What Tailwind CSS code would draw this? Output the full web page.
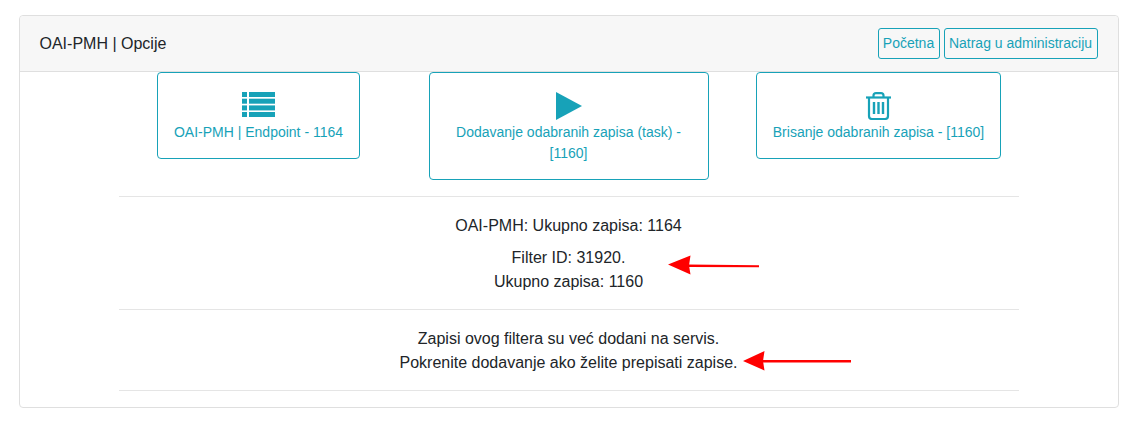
<!DOCTYPE html>
<html lang="en">
  <head>
    <meta charset="UTF-8" />
    <meta name="viewport" content="width=device-width, initial-scale=1.0" />
    <title>OAI-PMH | Opcije</title>
    <script src="https://cdn.jsdelivr.net/npm/@tailwindcss/browser@4"></script>
  </head>
  <body class="bg-white font-['Liberation_Sans',Arial,sans-serif] text-[16px] leading-[24px] text-[#212529]">
    <div class="relative mt-[15px] ml-[19px] w-[1100px] rounded border border-[#dfdfdf]">
      <!-- Header -->
      <div class="flex h-[56px] items-center justify-between rounded-t border-b border-[#dfdfdf] bg-[#f7f7f7] pr-5 pl-[19.5px]">
        <div>OAI-PMH | Opcije</div>
        <div class="flex gap-1">
          <a href="#" class="w-[62px] rounded-[3px] border border-[#17a2b8] py-1 pr-[1px] text-center text-[14px] leading-[21px] text-[#17a2b8]">Početna</a>
          <a href="#" class="w-[154px] rounded-[3px] border border-[#17a2b8] py-1 pr-[1px] text-center text-[14px] leading-[21px] text-[#17a2b8]">Natrag u administraciju</a>
        </div>
      </div>
      <!-- Body -->
      <div class="mx-auto w-[900px] pb-4 text-center">
        <div class="grid grid-cols-3 items-start gap-[30px]">
          <div class="flex">
            <a href="#" class="ml-[38px] block w-[203px] rounded-[4px] border border-[#17a2b8] py-[15px] text-[14px] leading-[21px] whitespace-nowrap text-[#17a2b8]">
              <span class="flex h-[34px] items-start justify-center pt-[4px]">
                <svg width="33" height="25" viewBox="0 0 33 25" fill="#17a2b8">
                  <rect x="0" y="0" width="5" height="5" />
                  <rect x="7" y="0" width="26" height="5" />
                  <rect x="0" y="6.7" width="5" height="5" />
                  <rect x="7" y="6.7" width="26" height="5" />
                  <rect x="0" y="13.4" width="5" height="5" />
                  <rect x="7" y="13.4" width="26" height="5" />
                  <rect x="0" y="20" width="5" height="5" />
                  <rect x="7" y="20" width="26" height="5" />
                </svg>
              </span>
              OAI-PMH | Endpoint - 1164
            </a>
          </div>
          <div class="flex justify-center">
            <a href="#" class="block w-[280px] rounded-[4px] border border-[#17a2b8] px-4 py-[15px] text-[14px] leading-[21px] text-[#17a2b8]">
              <span class="flex h-[34px] items-start justify-center pt-[4px]">
                <svg width="26" height="28" viewBox="0 0 26 28" fill="#17a2b8">
                  <path d="M0 0 L26 14 L0 28 Z" />
                </svg>
              </span>
              <span class="block pr-[1px]">Dodavanje odabranih zapisa (task) - [1160]</span>
            </a>
          </div>
          <div class="flex">
            <a href="#" class="ml-[17px] block w-[245px] rounded-[4px] border border-[#17a2b8] py-[15px] text-[14px] leading-[21px] whitespace-nowrap text-[#17a2b8]">
              <span class="flex h-[34px] items-start justify-center pt-[4px]">
                <svg width="25" height="28" viewBox="0 0 25 28" fill="none" stroke="#17a2b8" stroke-width="2.2">
                  <path d="M0 5.5 H25" />
                  <path d="M7.5 5 V3.6 Q7.5 1.2 10 1.2 H15 Q17.5 1.2 17.5 3.6 V5" />
                  <path d="M3 5.5 V24 Q3 27 6 27 H19 Q22 27 22 24 V5.5" />
                  <path d="M8 10 V22 M12.5 10 V22 M17 10 V22" stroke-width="2.4" />
                </svg>
              </span>
              Brisanje odabranih zapisa - [1160]
            </a>
          </div>
        </div>
        <hr class="mt-4 mb-[17px] border-black/10" />
        <div class="pr-[1px]">
          <p class="mb-2">OAI-PMH: Ukupno zapisa: 1164</p>
          <p>Filter ID: 31920.<br />Ukupno zapisa: 1160</p>
        </div>
        <hr class="mt-[15px] mb-[17px] border-black/10" />
        <p class="pr-[1px]">Zapisi ovog filtera su već dodani na servis.<br />Pokrenite dodavanje ako želite prepisati zapise.</p>
        <hr class="mt-[15px] border-black/10" />
      </div>
      <!-- Annotation arrows drawn over the page -->
      <svg class="pointer-events-none absolute top-[-16px] left-[-20px]" width="1139" height="422" viewBox="0 0 1139 422" fill="#ff0000" stroke="none">
        <path d="M759 265.2 L688 264.6 L688 267 L759 267.2 Z" />
        <path d="M668 264.5 L690.5 255.5 L689 265.5 L690.5 274.5 Z" />
        <path d="M851 360 L762 360 L762 362.4 L851 362.4 Z" />
        <path d="M743 361 L764.5 351 L763 361 L764.5 370.5 Z" />
      </svg>
    </div>
  </body>
</html>
